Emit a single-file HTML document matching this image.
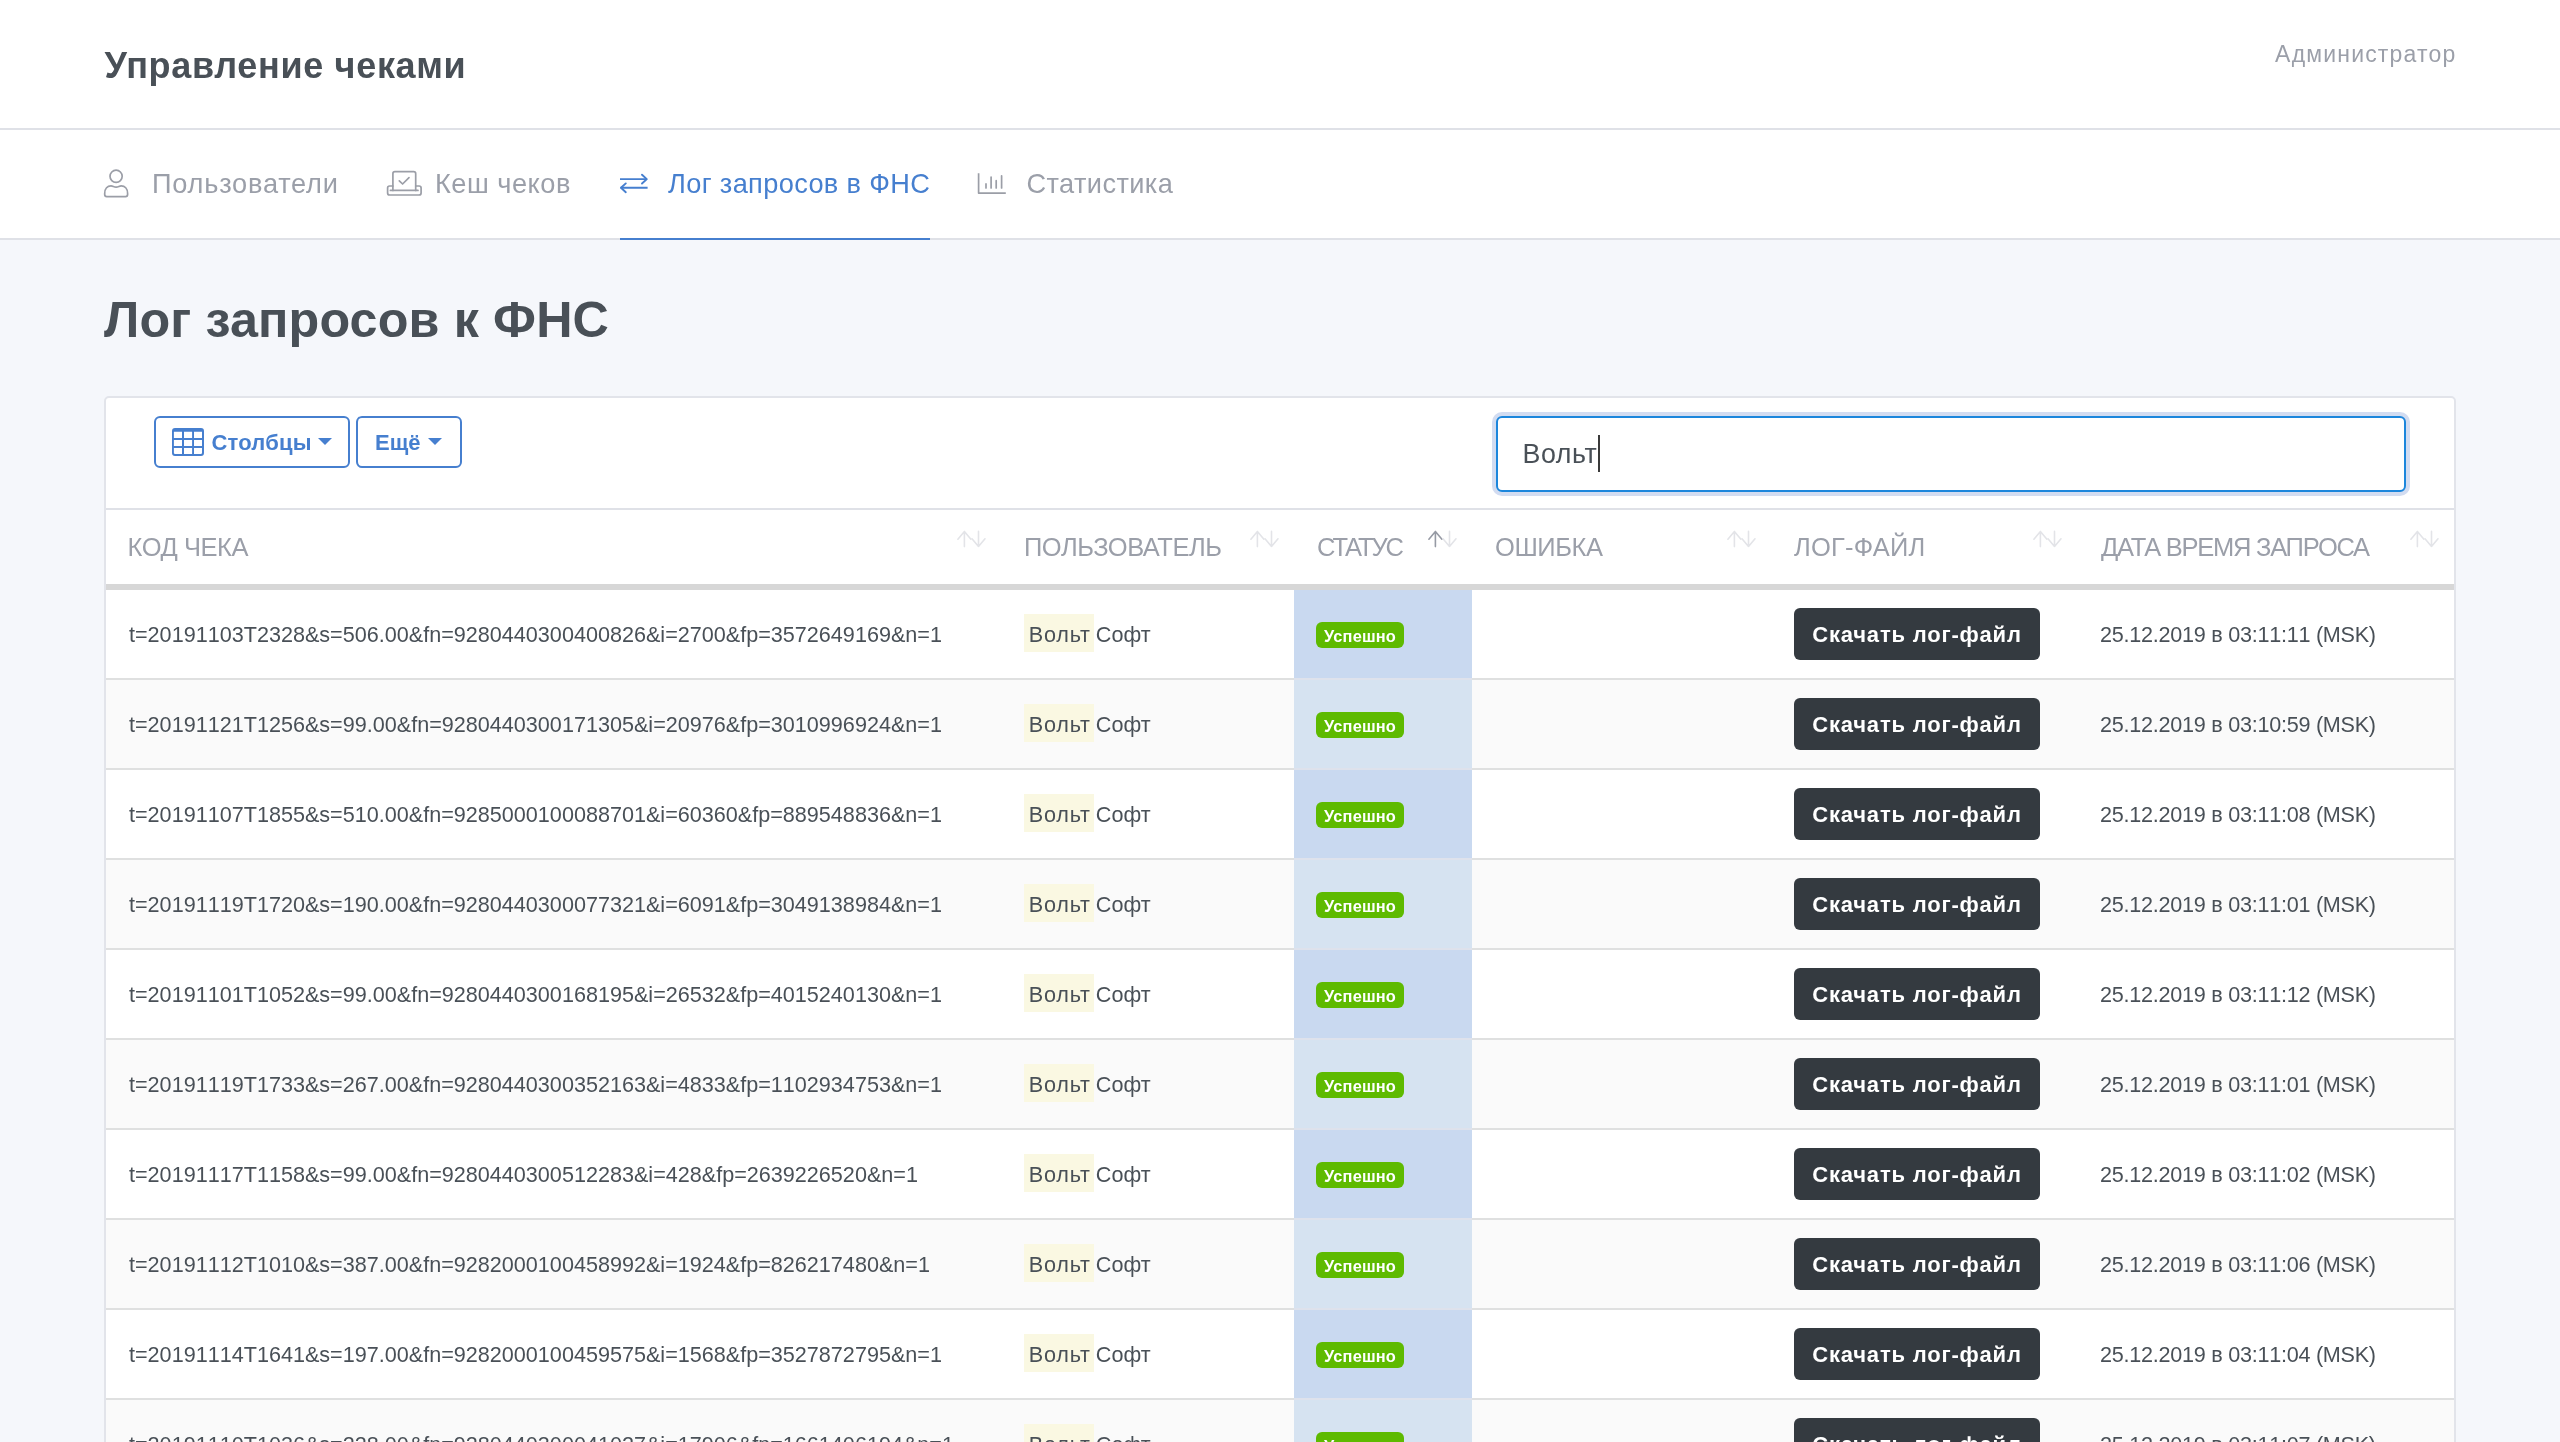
<!DOCTYPE html>
<html lang="ru">
<head>
<meta charset="utf-8">
<title>Лог запросов к ФНС</title>
<style>
*{box-sizing:border-box;margin:0;padding:0}
table,thead,tbody,tr,th,td,main,header,nav,label{display:block}
table{border-spacing:0;border-collapse:separate}
th,td{font-weight:400;text-align:left}
a{color:inherit;text-decoration:none}
button{font:inherit;background:none;text-align:left;letter-spacing:inherit;display:block;cursor:pointer}
html,body{width:2560px;height:1442px;overflow:hidden}
body>*{will-change:transform}
body{background:#f5f7fb;font-family:"Liberation Sans",sans-serif;color:#495057;position:relative}
.header{position:absolute;left:0;top:0;width:2560px;height:130px;background:#fff;border-bottom:2px solid #dfe1e7}
.brand{position:absolute;left:104.5px;top:36px;font-size:36px;line-height:60px;font-weight:700;letter-spacing:.67px;color:#495057;white-space:nowrap}

.admin{position:absolute;right:103.6px;top:35.5px;font-size:23px;line-height:36px;letter-spacing:1.18px;color:#9b9fa9;white-space:nowrap}
.nav{position:absolute;left:0;top:130px;width:2560px;height:110px;background:#fff;border-bottom:2px solid #dfe1e7}
.tab{position:absolute;top:0;height:110px;color:#9b9fa9;font-size:27.2px;line-height:108px;letter-spacing:.5px;white-space:nowrap}

.tab.active{color:#467fcf;border-bottom:2px solid #467fcf}
h1{position:absolute;left:104px;top:284px;font-size:50.3px;line-height:72px;font-weight:700;letter-spacing:.13px;color:#495057;white-space:nowrap}
.card{position:absolute;left:104px;top:396px;width:2352px;height:1100px;background:#fff;border:2px solid #e2e4ea;border-radius:5px;overflow:hidden}
.toolbar{position:absolute;left:0;top:0;width:2348px;height:110px}
.btn{position:absolute;top:18px;height:52px;border:2px solid #467fcf;border-radius:6px;color:#467fcf;font-weight:700;font-size:22px;line-height:49px;white-space:nowrap}
.btn .caret{position:absolute;top:19.8px;width:0;height:0;border-left:7px solid transparent;border-right:7px solid transparent;border-top:7.7px solid #467fcf}
.search{position:absolute;left:1390px;top:18px;width:910px;height:76px;border:2px solid #1c86dc;border-radius:6px;box-shadow:0 0 0 4px #d2dcf1;background:#fff;font-size:26.8px;line-height:72px;color:#495057;padding-left:24.5px;white-space:nowrap;letter-spacing:.55px}
.search i{display:inline-block;width:2px;height:37.5px;background:#3a3a3a;vertical-align:middle;margin-left:.8px;position:relative;top:-2.5px}
.thead{position:absolute;left:0;top:110px;width:2348px;height:82px;border-top:2px solid #dfe1e7;border-bottom:6px solid #d7d7d7;color:#9b9fa9;font-size:25.5px}
.th{position:absolute;top:0;height:74px;line-height:74px;white-space:nowrap}

.tbody{position:absolute;left:0;top:192px;width:2348px}
.tr{position:relative;height:90px;border-top:2px solid #dfe0e0;font-size:21.6px;line-height:90px}
.tr.first{height:88px;border-top:0}
.tr.even{background:#fafafa}
.td{position:absolute;top:0;height:88px;white-space:nowrap}
.c1{left:0;width:895px;padding-left:23px}
.c2{left:895px;width:293px;padding-left:23px}
.c3{left:1188px;width:178px;background:#c9d9f0}
.even .c3{background:#d6e3f1}
.c4{left:1366px;width:299px}
.c5{left:1665px;width:306px}
.c6{left:1971px;width:377px;padding-left:23px}
mark{background:#faf8e2;color:inherit;display:inline;padding:8px 3px 4.6px 4.8px;margin-right:-4px}
.badge{position:absolute;left:22px;top:32px;width:88px;height:26px;border-radius:6px;background:#5eba00;color:#fff;font-weight:700;font-size:16.4px;line-height:28px;text-align:center;letter-spacing:.15px}
.dl{position:absolute;left:23px;top:18px;width:246px;height:52px;border-radius:6px;background:#343a40;color:#fff;font-weight:700;font-size:22px;line-height:54px;text-align:center;letter-spacing:.8px}
.navicons{position:absolute;left:0;top:-130px}
.th svg.sort{position:absolute;top:20px;right:14px}
.ticon{position:absolute;left:16px;top:10px}
.date{letter-spacing:-.26px}
mark{letter-spacing:.8px}
.code,.date{font-kerning:none}
.c3{box-shadow:0 -2px 0 #dee2ec}
.first .c3{box-shadow:none}
@media (max-width:1400px){html{zoom:.5}}

</style>
</head>
<body>
<header class="header">
<a class="brand">Управление чеками</a>
<span class="admin">Администратор</span>
</header>
<nav class="nav">
<svg class="navicons" width="1100" height="240" viewBox="0 0 1100 240" fill="none" stroke="#9b9ea7" stroke-width="1.7" stroke-linecap="round" stroke-linejoin="round">
<circle cx="116.1" cy="176.3" r="6.1"/>
<path d="M104.7 193.5C104.7 188.5 107.5 185.9 111 185.9C113 185.9 113.8 187.1 116.1 187.1C118.4 187.1 119.2 185.9 121.2 185.9C124.7 185.9 127.6 188.5 127.6 193.5V194.6a2 2 0 0 1-2 2H106.7a2 2 0 0 1-2-2Z"/>
<path d="M392.9 190.4V173.7a2 2 0 0 1 2-2H413.7a2 2 0 0 1 2 2V190.4"/>
<path d="M390.4 190.4H418"/>
<path d="M392.9 186H389.6a2 2 0 0 0-2 2V193a2 2 0 0 0 2 2H419.1a2 2 0 0 0 2-2V188a2 2 0 0 0-2-2H415.7"/>
<path d="M399.3 180.8L402.6 184L409 177.7"/>
<g stroke="#467fcf" stroke-width="1.9">
<path d="M620 179.1H647M620.6 187.8H647.6" stroke-linecap="butt"/>
<path d="M642 174.7L646.8 179.1L642 183.5M625.8 183.4L621 187.8L625.8 192.2"/>
</g>
<path d="M978.6 173.3V193.1H1005.8" stroke-linecap="butt"/>
<path d="M986 183.9V188M991.1 177V188M996.2 180.7V188M1001.6 175.8V188"/>
</svg>
<a class="tab" style="left:104px;padding-left:48px;letter-spacing:.77px">Пользователи</a>
<a class="tab" style="left:387px;padding-left:48px">Кеш чеков</a>
<a class="tab active" style="left:620px;padding-left:48px;width:310px;letter-spacing:.35px">Лог запросов в ФНС</a>
<a class="tab" style="left:978px;padding-left:48.5px;letter-spacing:.4px">Статистика</a>
</nav>
<h1>Лог запросов к ФНС</h1>
<main class="card">
<div class="toolbar">
<button type="button" class="btn" style="left:48px;width:196px;padding-left:55.5px;letter-spacing:.2px"><svg class="ticon" width="32" height="28" viewBox="0 0 32 28"><path fill="#467fcf" fill-rule="evenodd" d="M3 0H29a3 3 0 0 1 3 3V25a3 3 0 0 1-3 3H3a3 3 0 0 1-3-3V3a3 3 0 0 1 3-3ZM1.9 3.8V10H10V3.8ZM12 3.8V10H20.1V3.8ZM22 3.8V10H30V3.8ZM1.9 11.9V17.9H10V11.9ZM12 11.9V17.9H20.1V11.9ZM22 11.9V17.9H30V11.9ZM1.9 19.9V24.8a1.2 1.2 0 0 0 1.2 1.2H10V19.9ZM12 19.9V26H20.1V19.9ZM22 19.9V26H28.8a1.2 1.2 0 0 0 1.2-1.2V19.9Z"/></svg>Столбцы<span class="caret" style="left:162.1px"></span></button>
<button type="button" class="btn" style="left:250px;width:106px;padding-left:17px">Ещё<span class="caret" style="left:70px"></span></button>
<label class="search">Вольт<i></i></label>
</div>
<table class="tbl">
<thead class="thead"><tr>
<th class="th" style="left:0;width:895px;padding-left:21.5px;letter-spacing:-0.44px">КОД ЧЕКА<svg class="sort" width="30" height="18" viewBox="0 0 30 18" fill="none" stroke-width="1.6" stroke-linecap="round" stroke-linejoin="round"><path d="M7.4 1.6V16.6M0.9 9.2L7.4 1.6L13.9 9.2" stroke="#e3e4e8"/><path d="M21.5 1.4V16.4M15 8.8L21.5 16.4L28 8.8" stroke="#e3e4e8"/></svg></th>
<th class="th" style="left:895px;width:293px;padding-left:23px;letter-spacing:-0.48px">ПОЛЬЗОВАТЕЛЬ<svg class="sort" width="30" height="18" viewBox="0 0 30 18" fill="none" stroke-width="1.6" stroke-linecap="round" stroke-linejoin="round"><path d="M7.4 1.6V16.6M0.9 9.2L7.4 1.6L13.9 9.2" stroke="#e3e4e8"/><path d="M21.5 1.4V16.4M15 8.8L21.5 16.4L28 8.8" stroke="#e3e4e8"/></svg></th>
<th class="th" style="left:1188px;width:178px;padding-left:23px;letter-spacing:-2.1px">СТАТУС<svg class="sort" width="30" height="18" viewBox="0 0 30 18" fill="none" stroke-width="1.6" stroke-linecap="round" stroke-linejoin="round"><path d="M7.4 1.6V16.6M0.9 9.2L7.4 1.6L13.9 9.2" stroke="#969aa4"/><path d="M21.5 1.4V16.4M15 8.8L21.5 16.4L28 8.8" stroke="#e3e4e8"/></svg></th>
<th class="th" style="left:1366px;width:299px;padding-left:23px;letter-spacing:-0.43px">ОШИБКА<svg class="sort" width="30" height="18" viewBox="0 0 30 18" fill="none" stroke-width="1.6" stroke-linecap="round" stroke-linejoin="round"><path d="M7.4 1.6V16.6M0.9 9.2L7.4 1.6L13.9 9.2" stroke="#e3e4e8"/><path d="M21.5 1.4V16.4M15 8.8L21.5 16.4L28 8.8" stroke="#e3e4e8"/></svg></th>
<th class="th" style="left:1665px;width:306px;padding-left:23px;letter-spacing:0.2px">ЛОГ-ФАЙЛ<svg class="sort" width="30" height="18" viewBox="0 0 30 18" fill="none" stroke-width="1.6" stroke-linecap="round" stroke-linejoin="round"><path d="M7.4 1.6V16.6M0.9 9.2L7.4 1.6L13.9 9.2" stroke="#e3e4e8"/><path d="M21.5 1.4V16.4M15 8.8L21.5 16.4L28 8.8" stroke="#e3e4e8"/></svg></th>
<th class="th" style="left:1971px;width:377px;padding-left:24px;letter-spacing:-1.26px">ДАТА ВРЕМЯ ЗАПРОСА<svg class="sort" width="30" height="18" viewBox="0 0 30 18" fill="none" stroke-width="1.6" stroke-linecap="round" stroke-linejoin="round"><path d="M7.4 1.6V16.6M0.9 9.2L7.4 1.6L13.9 9.2" stroke="#e3e4e8"/><path d="M21.5 1.4V16.4M15 8.8L21.5 16.4L28 8.8" stroke="#e3e4e8"/></svg></th>
</tr></thead>

<tbody class="tbody">
<tr class="tr odd first">
<td class="td c1"><span class="code">t=20191103T2328&amp;s=506.00&amp;fn=9280440300400826&amp;i=2700&amp;fp=3572649169&amp;n=1</span></td>
<td class="td c2"><span class="user"><mark>Вольт</mark> Софт</span></td>
<td class="td c3"><span class="badge">Успешно</span></td>
<td class="td c4"></td>
<td class="td c5"><a class="dl">Скачать лог-файл</a></td>
<td class="td c6"><span class="date">25.12.2019 в 03:11:11 (MSK)</span></td>
</tr>
<tr class="tr even">
<td class="td c1"><span class="code">t=20191121T1256&amp;s=99.00&amp;fn=9280440300171305&amp;i=20976&amp;fp=3010996924&amp;n=1</span></td>
<td class="td c2"><span class="user"><mark>Вольт</mark> Софт</span></td>
<td class="td c3"><span class="badge">Успешно</span></td>
<td class="td c4"></td>
<td class="td c5"><a class="dl">Скачать лог-файл</a></td>
<td class="td c6"><span class="date">25.12.2019 в 03:10:59 (MSK)</span></td>
</tr>
<tr class="tr odd">
<td class="td c1"><span class="code">t=20191107T1855&amp;s=510.00&amp;fn=9285000100088701&amp;i=60360&amp;fp=889548836&amp;n=1</span></td>
<td class="td c2"><span class="user"><mark>Вольт</mark> Софт</span></td>
<td class="td c3"><span class="badge">Успешно</span></td>
<td class="td c4"></td>
<td class="td c5"><a class="dl">Скачать лог-файл</a></td>
<td class="td c6"><span class="date">25.12.2019 в 03:11:08 (MSK)</span></td>
</tr>
<tr class="tr even">
<td class="td c1"><span class="code">t=20191119T1720&amp;s=190.00&amp;fn=9280440300077321&amp;i=6091&amp;fp=3049138984&amp;n=1</span></td>
<td class="td c2"><span class="user"><mark>Вольт</mark> Софт</span></td>
<td class="td c3"><span class="badge">Успешно</span></td>
<td class="td c4"></td>
<td class="td c5"><a class="dl">Скачать лог-файл</a></td>
<td class="td c6"><span class="date">25.12.2019 в 03:11:01 (MSK)</span></td>
</tr>
<tr class="tr odd">
<td class="td c1"><span class="code">t=20191101T1052&amp;s=99.00&amp;fn=9280440300168195&amp;i=26532&amp;fp=4015240130&amp;n=1</span></td>
<td class="td c2"><span class="user"><mark>Вольт</mark> Софт</span></td>
<td class="td c3"><span class="badge">Успешно</span></td>
<td class="td c4"></td>
<td class="td c5"><a class="dl">Скачать лог-файл</a></td>
<td class="td c6"><span class="date">25.12.2019 в 03:11:12 (MSK)</span></td>
</tr>
<tr class="tr even">
<td class="td c1"><span class="code">t=20191119T1733&amp;s=267.00&amp;fn=9280440300352163&amp;i=4833&amp;fp=1102934753&amp;n=1</span></td>
<td class="td c2"><span class="user"><mark>Вольт</mark> Софт</span></td>
<td class="td c3"><span class="badge">Успешно</span></td>
<td class="td c4"></td>
<td class="td c5"><a class="dl">Скачать лог-файл</a></td>
<td class="td c6"><span class="date">25.12.2019 в 03:11:01 (MSK)</span></td>
</tr>
<tr class="tr odd">
<td class="td c1"><span class="code">t=20191117T1158&amp;s=99.00&amp;fn=9280440300512283&amp;i=428&amp;fp=2639226520&amp;n=1</span></td>
<td class="td c2"><span class="user"><mark>Вольт</mark> Софт</span></td>
<td class="td c3"><span class="badge">Успешно</span></td>
<td class="td c4"></td>
<td class="td c5"><a class="dl">Скачать лог-файл</a></td>
<td class="td c6"><span class="date">25.12.2019 в 03:11:02 (MSK)</span></td>
</tr>
<tr class="tr even">
<td class="td c1"><span class="code">t=20191112T1010&amp;s=387.00&amp;fn=9282000100458992&amp;i=1924&amp;fp=826217480&amp;n=1</span></td>
<td class="td c2"><span class="user"><mark>Вольт</mark> Софт</span></td>
<td class="td c3"><span class="badge">Успешно</span></td>
<td class="td c4"></td>
<td class="td c5"><a class="dl">Скачать лог-файл</a></td>
<td class="td c6"><span class="date">25.12.2019 в 03:11:06 (MSK)</span></td>
</tr>
<tr class="tr odd">
<td class="td c1"><span class="code">t=20191114T1641&amp;s=197.00&amp;fn=9282000100459575&amp;i=1568&amp;fp=3527872795&amp;n=1</span></td>
<td class="td c2"><span class="user"><mark>Вольт</mark> Софт</span></td>
<td class="td c3"><span class="badge">Успешно</span></td>
<td class="td c4"></td>
<td class="td c5"><a class="dl">Скачать лог-файл</a></td>
<td class="td c6"><span class="date">25.12.2019 в 03:11:04 (MSK)</span></td>
</tr>
<tr class="tr even">
<td class="td c1"><span class="code">t=20191110T1036&amp;s=228.00&amp;fn=9280440300041027&amp;i=17906&amp;fp=1661406194&amp;n=1</span></td>
<td class="td c2"><span class="user"><mark>Вольт</mark> Софт</span></td>
<td class="td c3"><span class="badge">Успешно</span></td>
<td class="td c4"></td>
<td class="td c5"><a class="dl">Скачать лог-файл</a></td>
<td class="td c6"><span class="date">25.12.2019 в 03:11:07 (MSK)</span></td>
</tr>
</tbody>
</table>
</main>
</body>
</html>
